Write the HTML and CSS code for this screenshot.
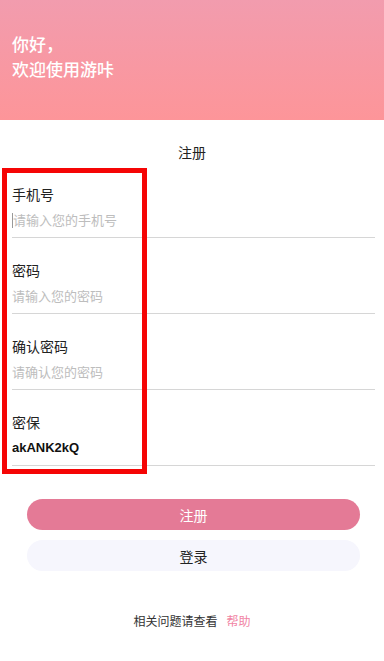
FILE: index.html
```html
<!DOCTYPE html>
<html lang="zh-CN">
<head>
    <meta charset="UTF-8">
    <meta name="viewport" content="width=device-width, initial-scale=1.0">
    <title>注册 - 游咔</title>
    <link rel="stylesheet" href="styles.css">
</head>
<body>
    <div class="header">
        <p class="welcome">你好，<br>欢迎使用游咔</p>
    </div>

    <h1 class="title">注册</h1>

    <form class="reg-form">
        <div class="form-group">
            <label for="phone">手机号</label>
            <div class="field"><span class="caret"></span><input type="text" id="phone" placeholder="请输入您的手机号"></div>
        </div>
        <div class="form-group">
            <label for="pwd">密码</label>
            <div class="field"><input type="password" id="pwd" placeholder="请输入您的密码"></div>
        </div>
        <div class="form-group">
            <label for="pwd2">确认密码</label>
            <div class="field"><input type="password" id="pwd2" placeholder="请确认您的密码"></div>
        </div>
        <div class="form-group">
            <label for="secret">密保</label>
            <div class="field"><input type="text" id="secret" class="secret" value="akANK2kQ"></div>
        </div>

        <div class="btns">
            <button type="submit" class="btn btn-primary">注册</button>
            <button type="button" class="btn btn-light">登录</button>
        </div>
    </form>

    <p class="footer">相关问题请查看<a href="#">帮助</a></p>

    <!-- 标注框 -->
    <div class="mark"></div>
</body>
</html>
```

FILE: styles.css
```css
body {
    margin: 0;
    font-family: "Noto Sans CJK SC", "Noto Sans", sans-serif;
    background: #fff;
    color: #222;
    position: relative;
    min-height: 661px;
}
.header {
    height: 120px;
    box-sizing: border-box;
    padding: 31px 12px 0;
    background: linear-gradient(180deg, #f29cae, #fd9599);
    color: #fff;
}
.welcome {
    margin: 0;
    font-size: 17px;
    line-height: 25px;
    font-weight: 500;
}
.title {
    margin: 22px 0 0;
    font-size: 14px;
    line-height: 20px;
    font-weight: 400;
    text-align: center;
    color: #222;
}
.reg-form {
    margin: 0;
}
.form-group {
    margin: 0 9px 0 12px;
    padding: 22px 0 7px;
    border-bottom: 1px solid #d6d6d6;
}
label {
    display: block;
    font-size: 14px;
    line-height: 20px;
    margin-bottom: 6px;
    color: #222;
}
.field {
    display: flex;
    align-items: center;
    height: 20px;
}
.caret {
    width: 1px;
    height: 15px;
    background: #999;
}
input {
    flex: 1;
    border: none;
    outline: none;
    padding: 0;
    margin: 0;
    font-family: inherit;
    font-size: 13px;
    line-height: 20px;
    height: 20px;
    color: #222;
    background: transparent;
}
input::placeholder {
    color: #bdbdbd;
}
.secret {
    font-family: "Liberation Sans", Arial, sans-serif;
    font-weight: bold;
    color: #111;
}
.btns {
    margin: 33px 24px 0 27px;
    display: flex;
    flex-direction: column;
    gap: 10px;
}
.btn {
    height: 31px;
    border: none;
    border-radius: 16px;
    font-family: inherit;
    font-size: 14px;
    padding: 0;
    cursor: pointer;
}
.btn-primary {
    background: #e47a96;
    color: #fff;
}
.btn-light {
    background: #f6f6fd;
    color: #222;
}
.footer {
    margin: 41px 0 0;
    text-align: center;
    font-size: 12px;
    line-height: 18px;
    color: #333;
}
.footer a {
    margin-left: 9px;
    color: #f184a4;
    text-decoration: none;
}
.mark {
    position: absolute;
    left: 2px;
    top: 168px;
    width: 145px;
    height: 306px;
    box-sizing: border-box;
    border: 5px solid #f50505;
    pointer-events: none;
}
```
